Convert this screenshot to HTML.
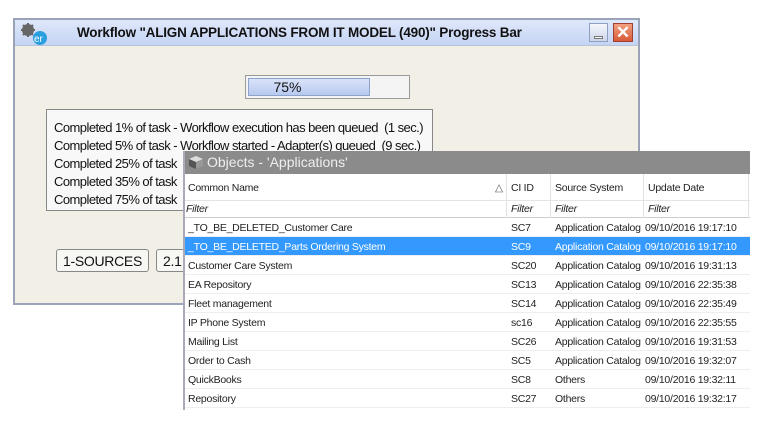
<!DOCTYPE html>
<html><head><style>
*{margin:0;padding:0;box-sizing:border-box}
body{width:776px;height:438px;background:#fff;position:relative;overflow:hidden;font-family:"Liberation Sans",Arial,sans-serif}
.w1{position:absolute;left:13px;top:18px;width:627px;height:287px;border:2px solid #9aa3b8;background:#f2efe7}
.t1{position:absolute;left:0;top:0;right:0;height:26px;background:linear-gradient(#dfe8fb,#c5d4f4);border-bottom:1px solid #b8c2d8}
.t1 .tt{position:absolute;left:62px;top:5px;font-weight:bold;font-size:13.5px;letter-spacing:-0.2px;color:#111}
.pb{position:absolute;left:230px;top:55px;width:165px;height:24px;border:1px solid #9a9a9a;background:#f4f4f4}
.pb .f{position:absolute;left:2px;top:2px;width:122px;height:18px;background:linear-gradient(#d9e3f9,#b8c9ef);border:1px solid #8ea3cc}
.pb .p{position:absolute;top:3px;text-align:center;font-size:14px;color:#111}
.log{position:absolute;left:31px;top:89px;width:387px;height:102px;border:1px solid #888;background:#f8f8f8;font-size:13px;letter-spacing:-0.55px;line-height:18px;padding:9px 0 0 7px;color:#111;white-space:nowrap;overflow:hidden}
.btn{position:absolute;top:229px;height:23px;border:1px solid #888;border-radius:3px;background:#f7f7f4;font-size:14px;letter-spacing:-0.3px;padding:3px 6px;color:#111}
.w2{position:absolute;left:183px;top:151px;width:567px;height:259px;background:#fff;border-left:2px solid #aab}
.t2{height:23px;background:#8b8b8b;color:#eee;font-size:14px;padding:3px 0 0 22px;position:relative}
.hd,.fl,.r{position:absolute;left:0;width:565px;font-size:10.5px;letter-spacing:-0.25px;color:#222}
.hd{top:23px;height:27px;border-bottom:1px solid #e4e4e4}
.fl{top:50px;height:17px;font-style:italic;border-bottom:1px solid #ccc}
.r{height:19px;border-bottom:1px solid #eee}
.c{position:absolute;top:4px;white-space:nowrap}
.hd .c{top:8px}
.fl .c{top:2px}
.sel{background:#3399ff;color:#fff}
.vl{position:absolute;top:23px;height:44px;width:1px;background:#e2e2e2}
</style></head><body>
<div class="w1">
 <div class="t1">
  <svg style="position:absolute;left:5px;top:3px" width="30" height="22"><circle cx="8" cy="7" r="6" fill="#666"/><g stroke="#666" stroke-width="2"><line x1="8" y1="0" x2="8" y2="14"/><line x1="1" y1="7" x2="15" y2="7"/><line x1="3" y1="2" x2="13" y2="12"/><line x1="13" y1="2" x2="3" y2="12"/></g><circle cx="20" cy="15" r="7" fill="#2a9fe0"/><text x="14" y="19" font-size="10" fill="#fff" font-family="Liberation Sans">er</text></svg>
  <div class="tt">Workflow "ALIGN APPLICATIONS FROM IT MODEL (490)" Progress Bar</div>
  <div style="position:absolute;left:574px;top:3px;width:19px;height:19px;border:1px solid #8ea0c0;background:linear-gradient(#f4f6fb,#cdd6e8)"><div style="position:absolute;left:4px;top:12px;width:9px;height:3px;background:#fff;border:1px solid #777"></div></div>
  <div style="position:absolute;left:598px;top:3px;width:20px;height:19px;border:1px solid #a04030;background:linear-gradient(#f2a080,#d85a38);color:#fff;font-size:17px;font-weight:bold;text-align:center;line-height:18px">✕</div>
 </div>
 <div class="pb"><div class="f"></div><div class="p" style="right:0;left:-80px">75%</div></div>
 <div class="log">Completed 1% of task - Workflow execution has been queued &nbsp;(1 sec.)<br>Completed 5% of task - Workflow started - Adapter(s) queued &nbsp;(9 sec.)<br>Completed 25% of task<br>Completed 35% of task<br>Completed 75% of task</div>
 <div class="btn" style="left:41px">1-SOURCES</div>
 <div class="btn" style="left:141px">2.1</div>
</div>
<div class="w2">
 <div class="t2"><svg style="position:absolute;left:3px;top:4px" width="16" height="15"><polygon points="8,1 15,4 8,7 1,4" fill="#ddd"/><polygon points="1,4 8,7 8,14 1,11" fill="#555"/><polygon points="15,4 8,7 8,14 15,11" fill="#999"/></svg>Objects - 'Applications'</div>
 <div class="hd"><span class="c" style="left:3px">Common Name</span><span class="c" style="left:310px;color:#555">△</span><span class="c" style="left:326px">CI ID</span><span class="c" style="left:370px">Source System</span><span class="c" style="left:463px">Update Date</span></div>
 <div class="fl"><span class="c" style="left:1px">Filter</span><span class="c" style="left:326px">Filter</span><span class="c" style="left:370px">Filter</span><span class="c" style="left:463px">Filter</span></div>
 <div class="vl" style="left:321px"></div><div class="vl" style="left:365px"></div><div class="vl" style="left:458px"></div><div class="vl" style="left:563px"></div>
 <div class="r" style="top:67px"><span class="c" style="left:3px">_TO_BE_DELETED_Customer Care</span><span class="c" style="left:326px">SC7</span><span class="c" style="left:370px">Application Catalog</span><span class="c" style="left:460px">09/10/2016 19:17:10</span></div>
 <div class="r sel" style="top:86px"><span class="c" style="left:3px">_TO_BE_DELETED_Parts Ordering System</span><span class="c" style="left:326px">SC9</span><span class="c" style="left:370px">Application Catalog</span><span class="c" style="left:460px">09/10/2016 19:17:10</span></div>
 <div class="r" style="top:105px"><span class="c" style="left:3px">Customer Care System</span><span class="c" style="left:326px">SC20</span><span class="c" style="left:370px">Application Catalog</span><span class="c" style="left:460px">09/10/2016 19:31:13</span></div>
 <div class="r" style="top:124px"><span class="c" style="left:3px">EA Repository</span><span class="c" style="left:326px">SC13</span><span class="c" style="left:370px">Application Catalog</span><span class="c" style="left:460px">09/10/2016 22:35:38</span></div>
 <div class="r" style="top:143px"><span class="c" style="left:3px">Fleet management</span><span class="c" style="left:326px">SC14</span><span class="c" style="left:370px">Application Catalog</span><span class="c" style="left:460px">09/10/2016 22:35:49</span></div>
 <div class="r" style="top:162px"><span class="c" style="left:3px">IP Phone System</span><span class="c" style="left:326px">sc16</span><span class="c" style="left:370px">Application Catalog</span><span class="c" style="left:460px">09/10/2016 22:35:55</span></div>
 <div class="r" style="top:181px"><span class="c" style="left:3px">Mailing List</span><span class="c" style="left:326px">SC26</span><span class="c" style="left:370px">Application Catalog</span><span class="c" style="left:460px">09/10/2016 19:31:53</span></div>
 <div class="r" style="top:200px"><span class="c" style="left:3px">Order to Cash</span><span class="c" style="left:326px">SC5</span><span class="c" style="left:370px">Application Catalog</span><span class="c" style="left:460px">09/10/2016 19:32:07</span></div>
 <div class="r" style="top:219px"><span class="c" style="left:3px">QuickBooks</span><span class="c" style="left:326px">SC8</span><span class="c" style="left:370px">Others</span><span class="c" style="left:460px">09/10/2016 19:32:11</span></div>
 <div class="r" style="top:238px"><span class="c" style="left:3px">Repository</span><span class="c" style="left:326px">SC27</span><span class="c" style="left:370px">Others</span><span class="c" style="left:460px">09/10/2016 19:32:17</span></div>
</div>
</body></html>
